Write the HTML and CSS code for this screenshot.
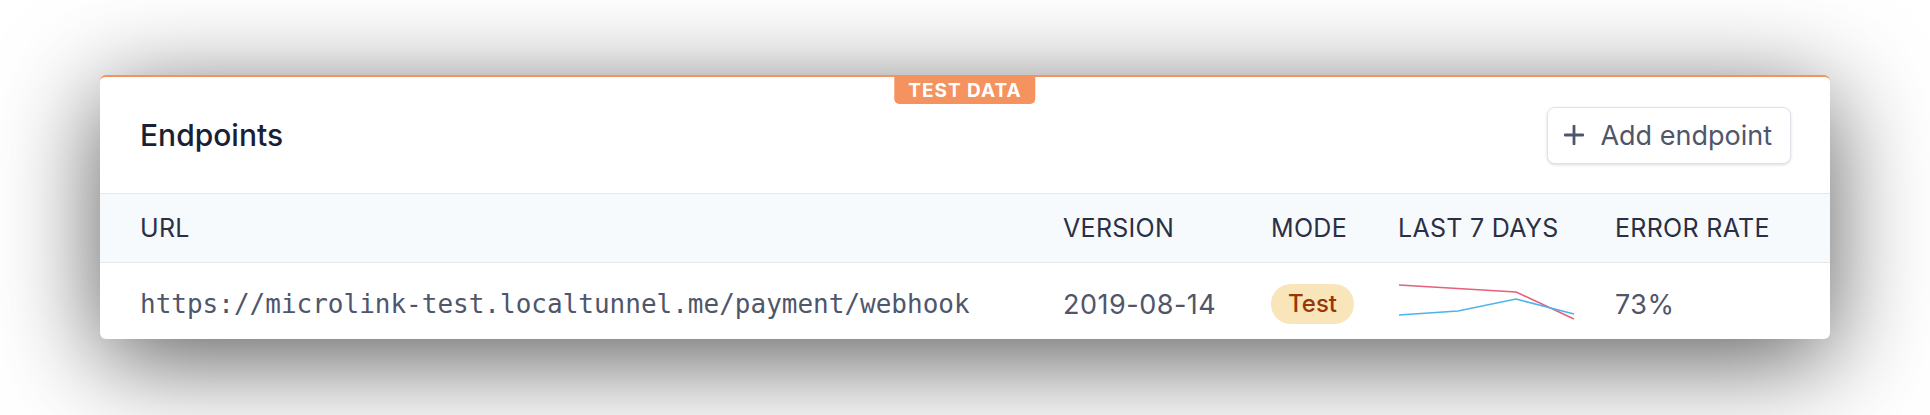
FILE: index.html
```html
<!DOCTYPE html>
<html lang="en">
<head>
    <meta charset="UTF-8">
    <meta name="viewport" content="width=device-width, initial-scale=1.0">
    <title>Endpoints</title>
    <link rel="stylesheet" href="styles.css">
</head>
<body>
    <div class="endpoints-card">
        <div class="test-badge">TEST DATA</div>

        <div class="card-header">
            <h1>Endpoints</h1>
            <button class="add-button">
                <svg class="plus-icon" width="20" height="20" viewBox="0 0 20 20">
                    <path d="M10 1v18M1 10h18" stroke="currentColor" stroke-width="2.8" stroke-linecap="round"/>
                </svg>
                Add endpoint
            </button>
        </div>

        <div class="table">
            <div class="table-row table-head">
                <div>URL</div>
                <div>VERSION</div>
                <div>MODE</div>
                <div>LAST 7 DAYS</div>
                <div>ERROR RATE</div>
            </div>
            <div class="table-row table-body">
                <div class="url">https://microlink-test.localtunnel.me/payment/webhook</div>
                <div>2019-08-14</div>
                <div><span class="mode-pill">Test</span></div>
                <div>
                    <svg class="sparkline" width="178" height="40" viewBox="0 0 178 40">
                        <polyline points="1,4 118,11 176,38" fill="none" stroke="#e5607a" stroke-width="1.6"/>
                        <polyline points="1,34 60,30 118,18 176,33" fill="none" stroke="#4db3ea" stroke-width="1.6"/>
                    </svg>
                </div>
                <div>73%</div>
            </div>
        </div>
    </div>
</body>
</html>
```

FILE: styles.css
```css
body {
    font-family: 'Inter', 'Noto Sans', sans-serif;
    margin: 0;
    padding: 75px 0 0 100px;
    min-height: 415px;
    box-sizing: border-box;
    background: #fff;
    color: #1a1f36;
}

.endpoints-card {
    position: relative;
    width: 1730px;
    background: white;
    border-top: 2px solid #f5925e;
    border-radius: 6px;
    box-shadow: 0 20px 100px rgba(0, 0, 0, 0.65);
    overflow: hidden;
}

.test-badge {
    position: absolute;
    top: 0;
    left: 50%;
    transform: translateX(-50%);
    background: #f4935f;
    color: white;
    font-size: 19px;
    font-weight: 700;
    letter-spacing: 1px;
    line-height: 27px;
    padding: 0 14px;
    border-radius: 0 0 5px 5px;
}

.card-header {
    height: 116px;
    display: flex;
    align-items: center;
    justify-content: space-between;
    padding: 0 39px 0 40px;
    border-bottom: 1px solid #e3e8ee;
}

.card-header h1 {
    margin: 0;
    font-size: 30px;
    font-weight: 500;
    color: #1a1f36;
}

.add-button {
    display: flex;
    align-items: center;
    gap: 16px;
    height: 57px;
    padding: 0 18px 0 16px;
    background: white;
    border: 1px solid #dfe3e9;
    border-radius: 8px;
    box-shadow: 0 1px 3px rgba(0, 0, 0, 0.14);
    font-family: inherit;
    font-size: 27px;
    color: #4f566b;
    cursor: pointer;
}

.plus-icon {
    color: #4f566b;
}

.table-row {
    display: grid;
    grid-template-columns: 923px 208px 127px 217px 1fr;
    align-items: center;
    padding-left: 40px;
}

.table-head {
    height: 68px;
    background: #f7fafc;
    border-bottom: 1px solid #e3e8ee;
    font-size: 25px;
    letter-spacing: 0.3px;
    color: #2a2f45;
}

.table-body {
    height: 70px;
    padding-top: 6px;
    font-size: 27px;
    letter-spacing: 0.5px;
    color: #4f566b;
}

.url {
    font-family: 'DejaVu Sans Mono', monospace;
    font-size: 26px;
    letter-spacing: 0;
}

.mode-pill {
    display: inline-block;
    background: #f8e5b9;
    color: #983705;
    font-size: 24px;
    font-weight: 500;
    letter-spacing: 0;
    line-height: 40px;
    padding: 0 17px;
    border-radius: 20px;
}

.sparkline {
    display: block;
    margin-top: -6px;
}
```
